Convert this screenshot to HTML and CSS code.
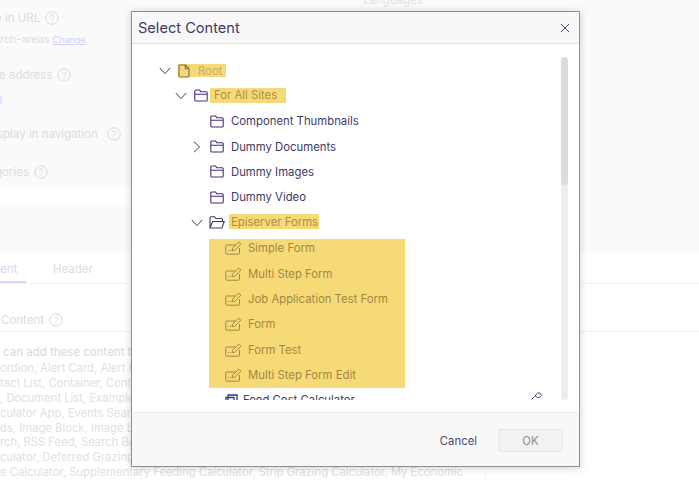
FILE: index.html
```html
<!DOCTYPE html>
<html lang="en">
<head>
<meta charset="utf-8">
<title>Select Content</title>
<link rel="stylesheet" href="styles.css">
</head>
<body>
<svg width="0" height="0" class="defs">
  <defs>
    <symbol id="help" viewBox="0 0 14 14"><circle cx="7" cy="7" r="6.2" fill="none" stroke="currentColor"/><path d="M5.2 5.5a1.8 1.8 0 1 1 2.7 1.6c-.6.4-.9.7-.9 1.4" fill="none" stroke="currentColor"/><circle cx="7" cy="10.4" r=".7" fill="currentColor"/></symbol>
    <symbol id="chev-down" viewBox="0 0 12 8"><path d="M.8 1l5.2 5.6L11.200 1" fill="none" stroke="currentColor"/></symbol>
    <symbol id="chev-right" viewBox="0 0 8 12"><path d="M1 .8l5.600 5.200L1 11.200" fill="none" stroke="currentColor"/></symbol>
    <symbol id="folder" viewBox="0 0 14 13"><path d="M1.800 1h3.700l1.300 1.700h5.400q1 0 1 1v7.300q0 1-1 1H1.800q-1 0-1-1V2q0-1 1-1z M.8 5.300h12.400" fill="none" stroke="#472d84" stroke-width="1.100"/></symbol>
    <symbol id="folder-open" viewBox="0 0 16 13"><path d="M1 12V1.800q0-1 1-1h3.500L7 2.500h5.500q1 0 1 1V5 M1 12L3.500 5.500h11.700L13 12z" fill="none" stroke="#3d3a70" stroke-width="1.100"/></symbol>
    <symbol id="page" viewBox="0 0 12 14"><path d="M2 1h5.500L11 4.500V12q0 1-1 1H2q-1 0-1-1V2q0-1 1-1z M7.300 1v3.700H11" fill="none" stroke="#8a6a3c" stroke-width="1.100"/></symbol>
    <symbol id="form" viewBox="0 0 17 14"><path d="M10.500 4H1.500q-.7 0-.7.7v7.800q0 .7.700.7h12.300q.7 0 .7-.7V7" fill="none" stroke="currentColor"/><path d="M7 9.600l.6-2.500 6-6 2.300 2.100-6 6z" fill="none" stroke="currentColor"/><path d="M3 9.500h.9M5 9.500h.9" stroke="currentColor"/></symbol>
    <symbol id="block" viewBox="0 0 13 12"><path d="M3 1h9v8H3z M1 3.500h8V11H1z" fill="none" stroke="#2c3a78" stroke-width="1.300"/></symbol>
    <symbol id="pin" viewBox="0 0 11 8"><path d="M.5 7.500L3.500 4.500 M4 4l2.500-3h2.500l1.500 2-2 2.500H6.500z" fill="none" stroke="#4f4c7c"/></symbol>
  </defs>
</svg>
<div class="page">
  <section class="settings">
    <div class="field first">
      <div class="label">e in URL <svg class="help"><use href="#help"/></svg></div>
      <div class="sub">rch-areas <a class="link">Change</a></div>
    </div>
    <div class="field second">
      <div class="label">e address <svg class="help"><use href="#help"/></svg></div>
      <div class="sub"><a class="link">e</a></div>
    </div>
    <div class="field third">
      <div class="label">splay in navigation <svg class="help wide"><use href="#help"/></svg></div>
    </div>
    <div class="field fourth">
      <div class="label">gories <svg class="help"><use href="#help"/></svg></div>
    </div>
    <div class="band"></div>
    <div class="languages">Languages</div>
  </section>
  <section class="content">
    <nav class="tabs">
      <span class="tab active">ent</span>
      <span class="tab">Header</span>
    </nav>
    <div class="content-head">Content <svg class="help"><use href="#help"/></svg></div>
    <div class="content-body">
      <p class="lead">can add these content types</p>
      <p>ordion, Alert Card, Alert Bar, Banner</p>
      <p>tact List, Container, Content Area</p>
      <p>, Document List, Example Block</p>
      <p>culator App, Events Search, Form</p>
      <p>ds, Image Block, Image List, Links</p>
      <p>rch, RSS Feed, Search Box, Tabs</p>
      <p>culator, Deferred Grazing Calculator, Feed</p>
      <p>e Calculator, Supplementary Feeding Calculator, Strip Grazing Calculator, My Economic</p>
    </div>
  </section>
</div>

<div class="dialog" role="dialog">
  <header class="dialog-head">
    <h1 class="dialog-title">Select Content</h1>
    <svg class="close" viewBox="0 0 10 10"><path d="M1 1l8 8M9 1l-8 8" stroke="#4a4a7a" fill="none"/></svg>
  </header>
  <div class="dialog-main">
    <div class="tree">
      <div class="row lv0"><svg class="chev"><use href="#chev-down"/></svg><span class="hl root-hl"><svg class="ico page-ico"><use href="#page"/></svg><span class="root-text">Root</span></span></div>
      <div class="row lv1"><svg class="chev"><use href="#chev-down"/></svg><svg class="ico"><use href="#folder"/></svg><span class="hl text-hl">For All Sites</span></div>
      <div class="row lv2"><span class="chev"></span><svg class="ico"><use href="#folder"/></svg><span class="text">Component Thumbnails</span></div>
      <div class="row lv2"><svg class="chev chev-r"><use href="#chev-right"/></svg><svg class="ico"><use href="#folder"/></svg><span class="text">Dummy Documents</span></div>
      <div class="row lv2"><span class="chev"></span><svg class="ico"><use href="#folder"/></svg><span class="text">Dummy Images</span></div>
      <div class="row lv2"><span class="chev"></span><svg class="ico"><use href="#folder"/></svg><span class="text">Dummy Video</span></div>
      <div class="row lv2"><svg class="chev"><use href="#chev-down"/></svg><svg class="ico open-ico"><use href="#folder-open"/></svg><span class="hl text-hl">Episerver Forms</span></div>
      <div class="forms">
        <div class="row form-row"><svg class="ico form-ico"><use href="#form"/></svg><span>Simple Form</span></div>
        <div class="row form-row"><svg class="ico form-ico"><use href="#form"/></svg><span>Multi Step Form</span></div>
        <div class="row form-row"><svg class="ico form-ico"><use href="#form"/></svg><span>Job Application Test Form</span></div>
        <div class="row form-row"><svg class="ico form-ico"><use href="#form"/></svg><span>Form</span></div>
        <div class="row form-row"><svg class="ico form-ico"><use href="#form"/></svg><span>Form Test</span></div>
        <div class="row form-row"><svg class="ico form-ico"><use href="#form"/></svg><span>Multi Step Form Edit</span></div>
      </div>
      <div class="row lv3"><svg class="ico block-ico"><use href="#block"/></svg><span class="text">Feed Cost Calculator</span><svg class="pin"><use href="#pin"/></svg></div>
    </div>
    <div class="scrollbar"><div class="thumb"></div></div>
  </div>
  <footer class="dialog-foot">
    <button class="btn-cancel">Cancel</button>
    <button class="btn-ok">OK</button>
  </footer>
</div>
</body>
</html>
```
FILE: styles.css
```css
* { box-sizing: border-box; }
html, body { margin: 0; height: 485px; overflow: hidden; }
body { font-family: Inter, "Liberation Sans", sans-serif; background: #fff; color: #e0dfe6; position: relative; }
.defs { position: absolute; }
p { margin: 0; }

.page { width: 699px; height: 485px; overflow: hidden; }
.settings { position: relative; height: 253px; padding-top: 9px; background: #fafafa; font-size: 11.500px; color: #dddce0; }
.first { margin-left: -5px; }
.second { margin-left: -1px; margin-top: 19px; }
.second .sub { margin-top: 7px; margin-left: -2px; }
.third { margin-left: -3px; margin-top: 20px; }
.fourth { margin-left: -5px; margin-top: 20px; }
.label { display: flex; align-items: center; gap: 5px; height: 18px; white-space: nowrap; }
.sub { margin-top: 6px; margin-left: 5px; font-size: 10.800px; height: 14px; white-space: nowrap; color: #dedde2; }
.link { color: #cfd0fa; text-decoration: underline; font-size: 9px; }
.help { width: 14px; height: 14px; color: #d8d7da; flex: none; }
.help.wide { margin-left: 4px; }
.band { width: 132px; height: 20px; margin-top: 6px; background: #fff; }
.languages { position: absolute; left: 363px; top: -7px; font-size: 11.500px; color: #e2e2e2; }

.content { height: 232px; font-size: 11.500px; color: #e0dfe5; }
.tabs { display: flex; height: 31px; border-bottom: 1px solid #f4f4f4; color: #dcdce4; }
.tab { height: 30px; padding-top: 9px; }
.tab.active { width: 26px; padding-right: 13px; border-bottom: 2px solid #d6d8fa; color: #d4d6f6; text-align: right; }
.tab + .tab { margin-left: 27px; }
.content-head { display: flex; align-items: center; gap: 5px; height: 36px; margin-top: 12px; padding: 13px 0 0 1px; border-bottom: 1px solid #f2f2f2; color: #dcdbe1; }
.content-head .help { width: 14px; height: 14px; }
.content-body { width: 486px; height: 152px; padding-top: 13px; font-size: 11.250px; line-height: 14.900px; white-space: nowrap; border-right: 1px solid #f6f6f6; }
.lead { color: #d9d8dc; margin-left: 3px; margin-bottom: 1px; font-size: 11.500px; }

.dialog { position: absolute; left: 131px; top: 11px; width: 449px; height: 456px; display: flex; flex-direction: column; background: #fff; border: 1px solid #8f8f8f; box-shadow: 0 1px 8px rgba(0,0,0,.18); color: #3d3a66; }
.dialog-head { display: flex; align-items: center; justify-content: space-between; height: 32px; padding: 0 9px 0 6px; background: #f8f8f8; border-bottom: 1px solid #e4e4e4; flex: none; }
.dialog-title { margin: 0; font-size: 14.600px; font-weight: 400; }
.close { width: 10px; height: 10px; }
.dialog-main { position: relative; flex: 1; min-height: 0; overflow: hidden; }
.tree { height: 355.500px; overflow: hidden; padding-top: 14px; font-size: 11.330px; }
.row { display: flex; align-items: center; height: 25.340px; white-space: nowrap; }
.lv0 { padding-left: 27px; }
.lv1 { padding-left: 43px; }
.lv2 { padding-left: 59px; }
.lv3 { padding-left: 93px; }
.chev { width: 12px; height: 8px; margin-right: 7px; flex: none; color: #3d3a66; }
.chev-r { width: 8px; height: 12px; margin-left: 2px; margin-right: 9px; }
.ico { width: 14px; height: 13px; flex: none; margin-right: 7px; }
.open-ico { width: 16px; margin-left: -1px; margin-right: 6px; }
.hl { background: #f7da78; color: #a88f44; }
.root-hl { display: flex; align-items: center; height: 13px; width: 48px; }
.page-ico { width: 12px; height: 14px; margin-right: 8px; }
.root-text { color: #c8ae63; }
.text-hl { height: 15px; line-height: 15px; }
.lv1 .ico { margin-right: 2px; }
.lv1 .text-hl { width: 76px; padding-left: 4px; }
.lv2 .text-hl { width: 90px; margin-left: -2px; margin-bottom: 2px; padding-left: 2px; line-height: 17.500px; }
.forms { margin-left: 77px; margin-top: 3.500px; width: 196px; height: 149px; background: #f7da78; color: #a08840; overflow: hidden; }
.form-row { padding-left: 16px; }
.form-row:first-child { margin-top: -3px; }
.form-ico { width: 17px; height: 14px; margin-right: 6px; color: #a08840; }
.block-ico { width: 13px; height: 12px; margin-right: 5px; }
.pin { width: 11px; height: 8px; margin-left: 176px; margin-top: -8px; flex: none; }
.scrollbar { position: absolute; right: 11px; top: 13px; width: 7px; height: 343px; border-radius: 4px; background: #eee; }
.thumb { height: 128px; border-radius: 4px; background: #dcdcdc; }
.dialog-foot { display: flex; align-items: center; justify-content: flex-end; gap: 21px; height: 54px; padding: 2px 16px 0 0; background: #f8f8f8; border-top: 1px solid #ececec; flex: none; }
.btn-cancel { border: 0; background: none; padding: 0; font: inherit; font-size: 11.330px; color: #4d4a72; }
.btn-ok { width: 65px; height: 23px; border: 1px solid #e6e6e6; border-radius: 3px; background: #f2f2f2; font: inherit; font-size: 11.330px; color: #8d8d8d; padding: 0; }
```
